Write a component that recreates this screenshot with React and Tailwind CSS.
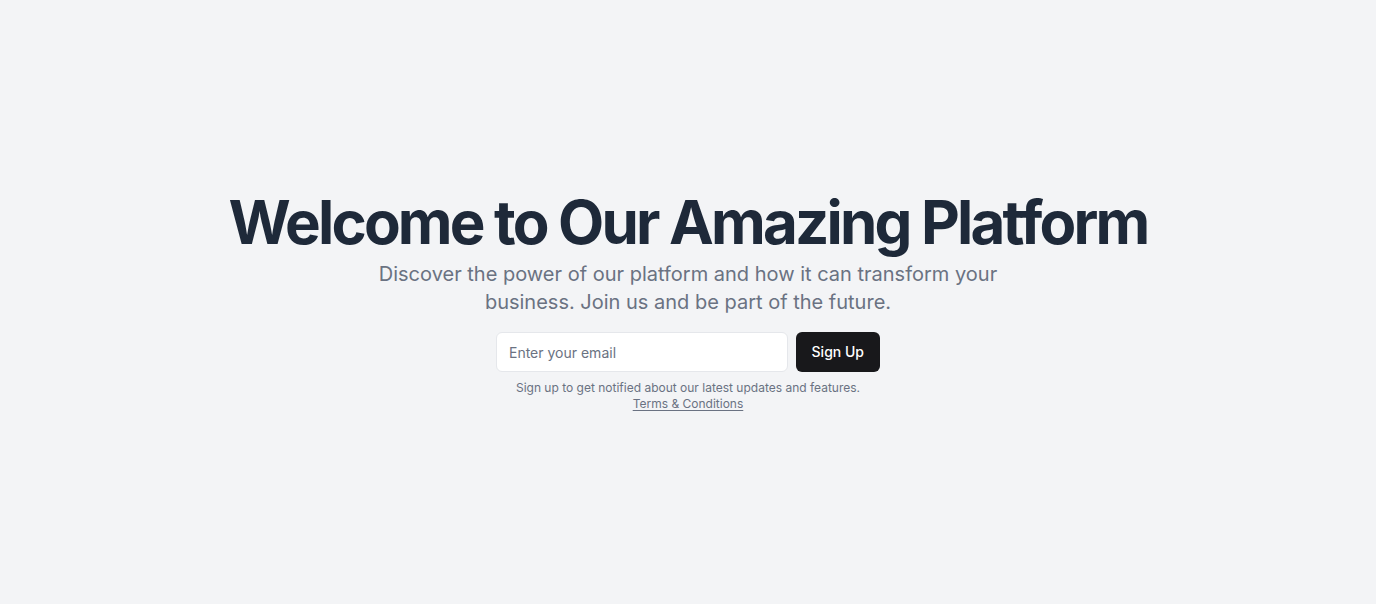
export default function App() {
  return (
    <div className="min-h-screen w-full bg-gray-100 flex items-center justify-center px-4" style={{ fontFamily: 'Inter, "Noto Sans", sans-serif' }}>
      <div className="flex flex-col items-center space-y-4 text-center">
        <div className="space-y-2">
          <h1 className="text-6xl font-bold tracking-[-0.047em] text-gray-800">Welcome to Our Amazing Platform</h1>
          <p className="mx-auto max-w-[700px] text-xl text-gray-500">
            Discover the power of our platform and how it can transform your business. Join us and be part of the future.
          </p>
        </div>
        <div className="w-full max-w-sm space-y-2">
          <form className="flex gap-2" onSubmit={(e) => e.preventDefault()}>
            <input
              type="email"
              placeholder="Enter your email"
              className="flex-1 h-10 rounded-md border border-gray-200 bg-white px-3 text-sm text-gray-800 placeholder:text-gray-500 outline-none"
            />
            <button type="submit" className="h-10 rounded-md bg-zinc-900 px-4 text-sm font-medium text-white">
              Sign Up
            </button>
          </form>
          <p className="text-xs text-gray-500">
            Sign up to get notified about our latest updates and features.
            <br />
            <a href="#" className="underline underline-offset-2">Terms &amp; Conditions</a>
          </p>
        </div>
      </div>
    </div>
  );
}
